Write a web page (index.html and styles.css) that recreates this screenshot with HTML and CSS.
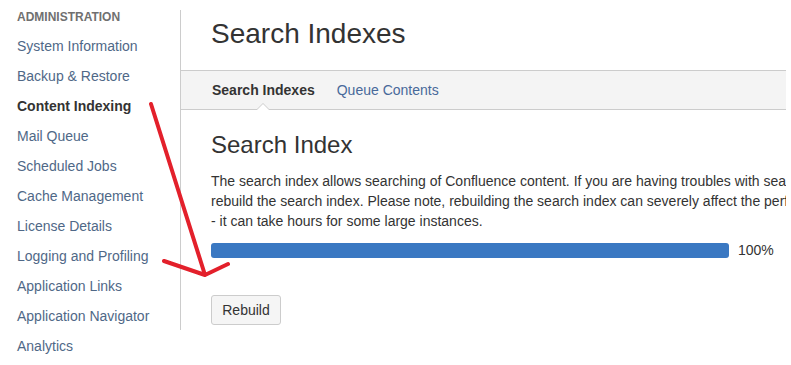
FILE: index.html
```html
<!DOCTYPE html>
<html>
<head>
  <title>Search Indexes</title>
  <link rel="stylesheet" href="styles.css">
</head>
<body>
  <div class="page">
    <div class="sidebar">
      <h5 class="sidebar-title">ADMINISTRATION</h5>
      <ul class="nav">
        <li><a href="#">System Information</a></li>
        <li><a href="#">Backup &amp; Restore</a></li>
        <li class="active"><a href="#">Content Indexing</a></li>
        <li><a href="#">Mail Queue</a></li>
        <li><a href="#">Scheduled Jobs</a></li>
        <li><a href="#">Cache Management</a></li>
        <li><a href="#">License Details</a></li>
        <li><a href="#">Logging and Profiling</a></li>
        <li><a href="#">Application Links</a></li>
        <li><a href="#">Application Navigator</a></li>
        <li><a href="#">Analytics</a></li>
      </ul>
    </div>

    <div class="main">
      <div class="page-header">
        <h1>Search Indexes</h1>
      </div>

      <div class="tabs">
        <a href="#" class="tab active">Search Indexes</a>
        <a href="#" class="tab">Queue Contents</a>
      </div>

      <div class="section">
        <h2>Search Index</h2>
        <p class="description">
          The search index allows searching of Confluence content. If you are having troubles with search results you may need to<br>
          rebuild the search index. Please note, rebuilding the search index can severely affect the performance of your instance<br>
          - it can take hours for some large instances.
        </p>

        <div class="progress-row">
          <div class="progress">
            <div class="progress-fill" style="width: 100%"></div>
          </div>
          <span class="progress-value">100%</span>
        </div>

        <button type="button" class="button">Rebuild</button>
      </div>
    </div>
  </div>

  <!-- annotation drawn over the screenshot -->
  <svg class="annotation" width="791" height="365" viewBox="0 0 791 365">
    <path d="M151 104 L205 275 M164 261 L205 275 L228 264" fill="none" stroke="#e3202b" stroke-width="4" stroke-linecap="round" stroke-linejoin="round"/>
  </svg>
</body>
</html>
```

FILE: styles.css
```css
:root {
  --text: #333333;
  --text-muted: #707070;
  --link: #4f6887;
  --tab-link: #48699a;
  --border: #cccccc;
  --tab-bg: #f4f4f4;
  --progress: #3a78c2;
}

* {
  margin: 0;
  padding: 0;
  box-sizing: border-box;
}

body {
  font-family: "Liberation Sans", Arial, sans-serif;
  font-size: 14px;
  color: var(--text);
  background: #ffffff;
  width: 791px;
  height: 365px;
  overflow: hidden;
}

a {
  text-decoration: none;
}

.page {
  display: flex;
  align-items: flex-start;
}

/* sidebar */
.sidebar {
  width: 180px;
  flex-shrink: 0;
  padding: 7px 0 0 17px;
}

.sidebar-title {
  font-size: 12px;
  font-weight: 700;
  line-height: 20px;
  color: var(--text-muted);
  margin-bottom: 4px;
}

.nav {
  list-style: none;
}

.nav li {
  line-height: 30px;
  font-size: 14px;
}

.nav a {
  color: var(--link);
}

.nav li.active a {
  color: var(--text);
  font-weight: 700;
}

/* main */
.main {
  width: 606px;
  margin-top: 10px;
  border-left: 1px solid var(--border);
  overflow: hidden;
}

.page-header {
  padding: 6px 30px 19px;
}

.page-header h1 {
  font-size: 28px;
  font-weight: 400;
  line-height: 35px;
  color: var(--text);
}

.tabs {
  display: flex;
  gap: 22px;
  height: 40px;
  padding-left: 31px;
  background: var(--tab-bg);
  border-top: 1px solid var(--border);
  border-bottom: 1px solid var(--border);
}

.tab {
  position: relative;
  line-height: 38px;
  font-size: 14px;
  color: var(--tab-link);
  white-space: nowrap;
}

.tab.active {
  color: var(--text);
  font-weight: 700;
}

.tab.active::before,
.tab.active::after {
  content: '';
  position: absolute;
  left: 50%;
  width: 0;
  height: 0;
  border-style: solid;
  border-color: transparent;
}

.tab.active::before {
  bottom: -1px;
  margin-left: -7px;
  border-width: 0 7px 7px;
  border-bottom-color: var(--border);
}

.tab.active::after {
  bottom: -1px;
  margin-left: -6px;
  border-width: 0 6px 6px;
  border-bottom-color: #ffffff;
}

.section {
  padding: 20px 0 5px 30px;
}

.section h2 {
  font-size: 24px;
  font-weight: 400;
  line-height: 30px;
  margin-bottom: 11px;
}

.description {
  font-size: 14px;
  line-height: 20px;
  white-space: nowrap;
}

.progress-row {
  display: flex;
  align-items: center;
  gap: 9px;
  margin-top: 9px;
}

.progress {
  flex-shrink: 0;
  width: 518px;
  height: 15px;
  border-radius: 3px;
  background: #e9e9e9;
  overflow: hidden;
}

.progress-fill {
  height: 100%;
  background: var(--progress);
}

.progress-value {
  font-size: 14px;
  line-height: 20px;
  white-space: nowrap;
}

.button {
  display: block;
  margin-top: 35px;
  width: 70px;
  height: 30px;
  border: 1px solid var(--border);
  border-radius: 3px;
  background: #f5f5f5;
  color: var(--text);
  font-family: inherit;
  font-size: 14px;
  cursor: pointer;
}

.annotation {
  position: absolute;
  top: 0;
  left: 0;
  pointer-events: none;
}
```
